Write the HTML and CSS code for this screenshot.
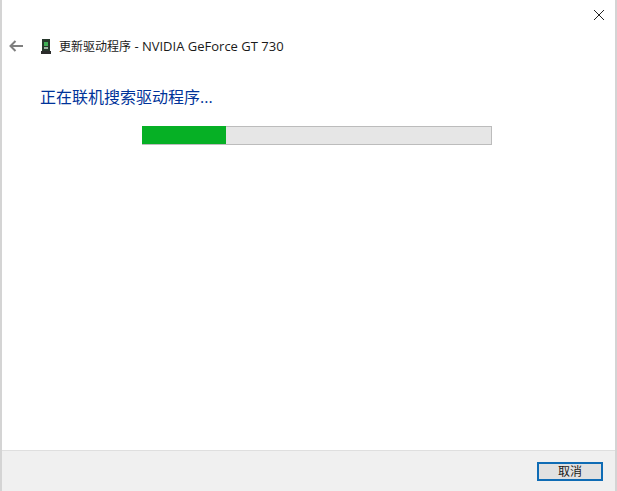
FILE: index.html
```html
<!DOCTYPE html>
<html lang="zh-CN">
<head>
    <meta charset="UTF-8">
    <title>更新驱动程序</title>
    <link rel="stylesheet" href="styles.css">
</head>
<body>
    <div class="wrapper">
        <div class="close-row">
            <svg class="close-icon" width="12" height="12" viewBox="0 0 12 12">
                <path d="M1 1L11 11M11 1L1 11" stroke="#222" stroke-width="1" fill="none"/>
            </svg>
        </div>
        <div class="header">
            <svg class="back-icon" width="14" height="12" viewBox="0 0 14 12">
                <path d="M6.5 1L1.5 6L6.5 11M1.5 6H14" stroke="#7f7f7f" stroke-width="2" fill="none"/>
            </svg>
            <svg class="card-icon" width="12" height="15" viewBox="0 0 12 15">
                <rect x="2" y="0" width="8" height="12" fill="#27382c"/>
                <rect x="4" y="3" width="4" height="4" fill="#3fae55"/>
                <rect x="4" y="8" width="4" height="2" fill="#9fb5a5"/>
                <rect x="1" y="12" width="10" height="3" fill="#2b2b2b"/>
            </svg>
            <span class="header-title">更新驱动程序<span class="header-device"> - NVIDIA GeForce GT 730</span></span>
        </div>
        <div class="main">
            <h1 class="main-title">正在联机搜索驱动程序...</h1>
            <div class="progress">
                <div class="progress-bar"></div>
            </div>
        </div>
        <div class="footer">
            <button class="btn-cancel">取消</button>
        </div>
    </div>
</body>
</html>
```

FILE: styles.css
```css
html, body {
    margin: 0;
    height: 100%;
    background: #fff;
}
.wrapper {
    box-sizing: border-box;
    height: 491px;
    display: flex;
    flex-direction: column;
    border-left: 2px solid #d4d4d4;
    border-right: 2px solid #d4d4d4;
    font-family: "Open Sans", "Noto Sans CJK SC", sans-serif;
    color: #1a1a1a;
}
.close-row {
    height: 31px;
    display: flex;
    justify-content: flex-end;
    padding: 9px 10px 0 0;
    box-sizing: border-box;
}
.header {
    height: 30px;
    display: flex;
    align-items: center;
    padding-left: 7px;
}
.back-icon {
    margin-right: 17px;
}
.card-icon {
    margin-right: 7px;
}
.header-title {
    font-size: 12px;
    white-space: nowrap;
}
.header-device {
    font-size: 13px;
}
.main {
    flex: 1;
    padding-left: 38px;
}
.main-title {
    margin: 0;
    padding-top: 23px;
    height: 26px;
    line-height: 26px;
    font-size: 16px;
    font-weight: normal;
    color: #003399;
}
.progress {
    box-sizing: border-box;
    width: 350px;
    height: 19px;
    margin: 16px 0 0 102px;
    background: #e6e6e6;
    border: 1px solid #bcbcbc;
}
.progress-bar {
    width: 84px;
    height: 18px;
    margin: -1px 0 0 -1px;
    background: #06b025;
}
.footer {
    height: 41px;
    box-sizing: border-box;
    display: flex;
    justify-content: flex-end;
    align-items: flex-start;
    padding: 11px 12px 0 0;
    background: #f0f0f0;
    border-top: 1px solid #dfdfdf;
}
.btn-cancel {
    box-sizing: border-box;
    width: 66px;
    height: 19px;
    padding: 0;
    font-family: "Open Sans", "Noto Sans CJK SC", sans-serif;
    font-size: 12px;
    line-height: 15px;
    color: #1a1a1a;
    background: #e1e1e1;
    border: 2px solid #0f6cb5;
}
```
